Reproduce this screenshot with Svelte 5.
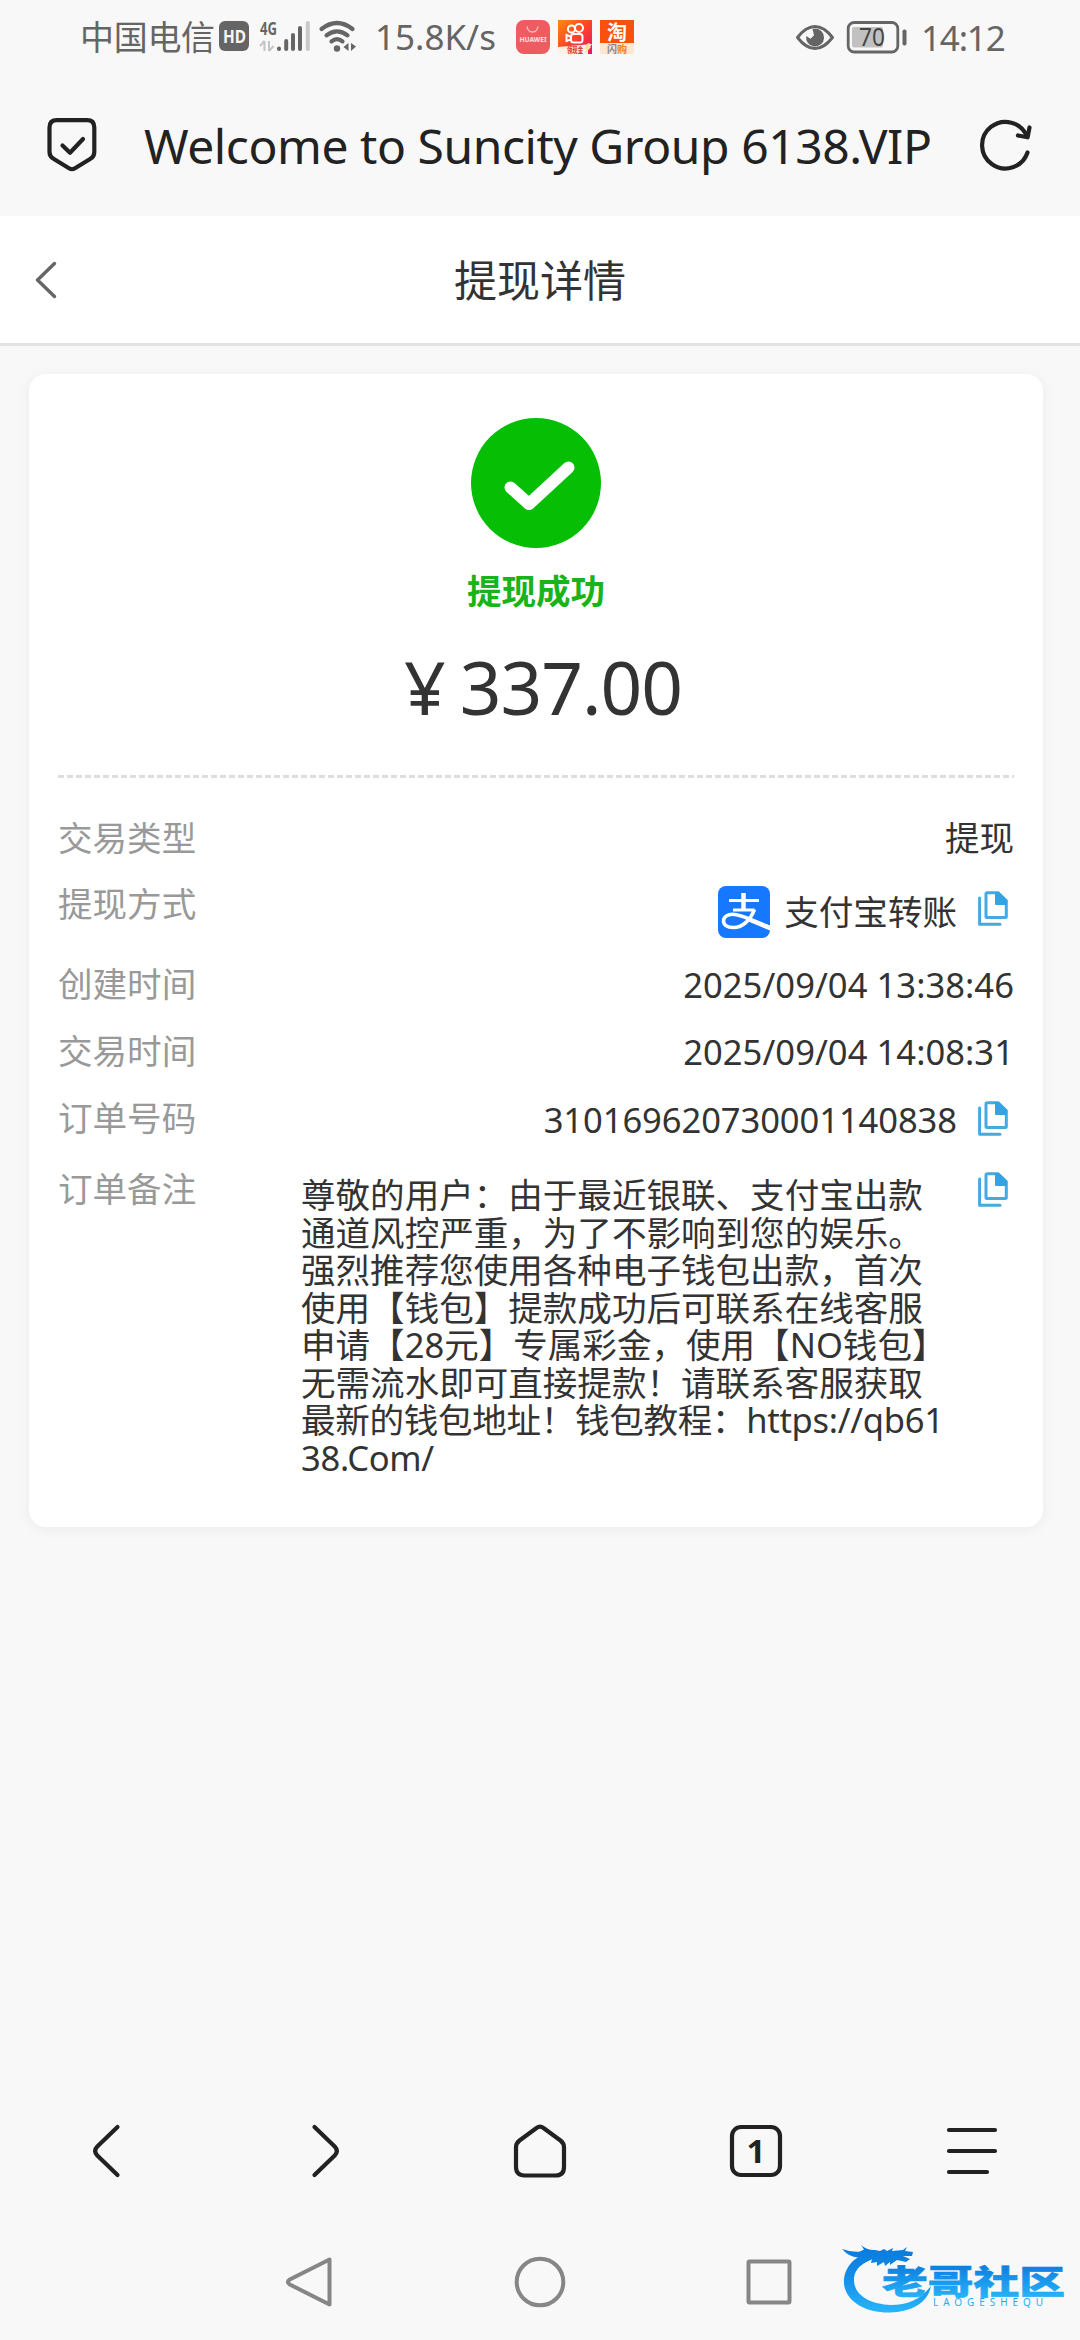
<script lang="ts">
  type Row = {
    key: string;
    label: string;
    value: string;
    kind?: 'latin' | 'order';
    alipay?: boolean;
    copy?: boolean;
  };

  const rows: Row[] = [
    { key: 'type', label: '交易类型', value: '提现' },
    { key: 'method', label: '提现方式', value: '支付宝转账', alipay: true, copy: true },
    { key: 'created', label: '创建时间', value: '2025/09/04 13:38:46', kind: 'latin' },
    { key: 'traded', label: '交易时间', value: '2025/09/04 14:08:31', kind: 'latin' },
    { key: 'order', label: '订单号码', value: '310169620730001140838', kind: 'order', copy: true },
  ];

  const noteLines = [
    '尊敬的用户：由于最近银联、支付宝出款',
    '通道风控严重，为了不影响到您的娱乐。',
    '强烈推荐您使用各种电子钱包出款，首次',
    '使用【钱包】提款成功后可联系在线客服',
    '申请【28元】专属彩金，使用【NO钱包】',
    '无需流水即可直接提款！请联系客服获取',
    '最新的钱包地址！钱包教程：https://qb61',
    '38.Com/',
  ];
</script>

{#snippet copyIcon()}
  <svg class="copy" width="30" height="35" viewBox="0 0 30 35" aria-hidden="true">
    <path d="M1.6 7v26.2H22" fill="none" stroke="#46a9e0" stroke-width="3" stroke-linecap="round" stroke-linejoin="round" />
    <path d="M9.5 1.7H20l8.3 8V25.600q0 1-1 1H9q-1 0-1-1V3q0-1.300 1.500-1.300z" fill="#fff" stroke="#46a9e0" stroke-width="3" />
    <path d="M17 1h4l8 8v5H18q-1 0-1-1z" fill="#35a3e3" />
  </svg>
{/snippet}

<div class="screen">
  <div class="status">
    <span class="carrier">中国电信</span>
    <svg class="signals" width="140" height="36" viewBox="218 19 140 36" aria-hidden="true">
      <rect x="219" y="21" width="30" height="30" rx="6" fill="#656565" />
      <text x="223" y="43" font-size="18.500" font-weight="700" fill="#f7f7f7" textLength="23" lengthAdjust="spacingAndGlyphs">HD</text>
      <text x="260" y="34.500" font-size="18" font-weight="700" fill="#656565" textLength="17" lengthAdjust="spacingAndGlyphs">4G</text>
      <path d="M264.500 41v10M260 46l4.500-5M269 41v10M269 51l4.500-5" stroke="#c4c4c4" stroke-width="2" fill="none" />
      <g stroke="#656565" stroke-width="4" stroke-linecap="round">
        <path d="M279 48.500v.5M286.200 41v8M293 35v14M300 28v21" />
        <path d="M307.800 23v26" stroke="#c8c8c8" />
      </g>
      <g fill="none" stroke="#656565" stroke-width="4.200" stroke-linecap="round">
        <path d="M321.500 29q15.500-12 31 0M326.500 35.300q10.500-8 21 0M331.500 41.300q5.500-4.500 11 0" />
      </g>
      <circle cx="337" cy="48.500" r="3.200" fill="#656565" />
      <path d="M348.500 43v8l-5-4zM351 43v8l5-4.500z" fill="#656565" />
    </svg>
    <span class="speed">15.8K/s</span>
    <svg class="apps" width="120" height="36" viewBox="515 18 120 36" aria-hidden="true">
      <defs>
        <linearGradient id="ks" x1="0" y1="0" x2="1" y2="1">
          <stop offset="0" stop-color="#ff8a10" />
          <stop offset=".5" stop-color="#fb4427" />
          <stop offset="1" stop-color="#e51372" />
        </linearGradient>
      </defs>
      <rect x="516" y="19" width="34" height="34" rx="8" fill="#ee5c62" />
      <path d="M527 25.500q1 5.500 5.500 5.500t5.500-5.500" fill="none" stroke="#ffc6c4" stroke-width="1.300" />
      <text x="519.500" y="41" font-size="7" font-weight="700" fill="#ffe0df" textLength="27" lengthAdjust="spacingAndGlyphs">HUAWEI</text>
      <rect x="558" y="19" width="34" height="34" fill="url(#ks)" />
      <g fill="none" stroke="#fff" stroke-width="2">
        <circle cx="571.500" cy="28" r="3.600" />
        <circle cx="579" cy="27" r="4" />
        <rect x="571" y="33" width="11.500" height="8.500" rx="2.500" />
        <path d="M570.500 35.500l-4-1.500v6l4-1.500" />
      </g>
      <path d="M558 46l34-3-4 6v4h-30z" fill="#fff0e8" />
      <text x="567" y="51.500" font-size="8" font-weight="700" fill="#d42a24" textLength="16" lengthAdjust="spacingAndGlyphs">领现金</text>
      <path d="M588 42l-4 6h3l-2 5 6-7h-3l2-4z" fill="#ffe08a" />
      <rect x="600" y="19" width="34" height="23" fill="#f9500d" />
      <rect x="600" y="42" width="34" height="11" fill="#fde6d2" />
      <text x="607" y="38.500" font-size="20" font-weight="700" fill="#fff">淘</text>
      <text x="607" y="51.500" font-size="10" font-weight="700" fill="#888">闪</text>
      <text x="617" y="51.500" font-size="10" font-weight="700" fill="#f47a1c">购</text>
    </svg>
    <svg class="power" width="114" height="36" viewBox="794 18 114 36" aria-hidden="true">
      <path d="M797.500 36.500Q806 25.500 815 25.500t17.500 11Q824 47.500 815 47.500t-17.500-11z" fill="none" stroke="#656565" stroke-width="3" stroke-linejoin="round" />
      <path d="M815 27.500a9 9 0 1 1-8.800 7.500l4.300 2.800 3.500-3.500-1.500-6.200z" fill="#656565" />
      <rect x="848.200" y="21.500" width="49.600" height="29.500" rx="6" fill="none" stroke="#656565" stroke-width="2.800" />
      <rect x="852" y="26" width="31" height="20.500" rx="2" fill="#c1c1c1" />
      <text x="859" y="45" font-size="25" fill="#454545" textLength="26" lengthAdjust="spacingAndGlyphs">70</text>
      <rect x="902.500" y="28.500" width="4" height="16" rx="1.800" fill="#656565" />
    </svg>
    <span class="clock">14:12</span>
  </div>

  <div class="address">
    <svg width="50" height="54" viewBox="0 0 50 54" fill="none" stroke="#222" stroke-width="4.200" stroke-linecap="round" stroke-linejoin="round" aria-hidden="true">
      <path d="M10 2.200H40q7.300 0 7.300 7.300V34q0 4.500-3.800 6.800L28 50.300q-3 1.800-6 0L6.500 40.800Q2.500 38.500 2.500 34V9.500Q2.500 2.200 10 2.200z" />
      <path d="M15.500 27.500l7.500 7.300L36 21" />
    </svg>
    <span class="site">Welcome to Suncity Group 6138.VIP</span>
    <svg class="reload" width="52" height="52" viewBox="0 0 52 52" fill="none" stroke="#222" stroke-width="4.200" stroke-linecap="round" stroke-linejoin="round" aria-hidden="true">
      <path d="M47.500 33.500A23.300 23.300 0 1 1 47 17.500" />
      <path d="M49.500 8.500L47.600 18.300 38 16.500" />
    </svg>
  </div>

  <header class="titlebar">
    <svg width="22" height="38" viewBox="0 0 22 38" fill="none" stroke="#666" stroke-width="3.400" stroke-linecap="round" stroke-linejoin="round" aria-hidden="true">
      <path d="M19.500 2.500L2.500 19l17 16.500" />
    </svg>
    <h1>提现详情</h1>
  </header>

  <main>
    <section class="card">
      <div class="result">
        <svg width="130" height="130" viewBox="0 0 130 130" aria-hidden="true">
          <circle cx="65" cy="65" r="65" fill="#06be04" />
          <path d="M39.500 69.500L58 86l39.500-36.500" fill="none" stroke="#fff" stroke-width="12" stroke-linecap="round" stroke-linejoin="round" />
        </svg>
        <strong>提现成功</strong>
        <p class="amount"><span class="yen">¥</span><span>337.00</span></p>
      </div>

      <div class="dash"></div>

      <dl>
        {#each rows as row (row.key)}
          <div class="row row--{row.key}">
            <dt>{row.label}</dt>
            <dd>
              {#if row.alipay}
                <svg class="alipay" width="52" height="52" viewBox="0 0 52 52" aria-hidden="true">
                  <rect width="52" height="52" rx="8" fill="#1677ff" />
                  <g fill="none" stroke="#fff">
                    <path d="M11 14.500H41M15 24H36.500" stroke-width="3" />
                    <path d="M25.500 7V23" stroke-width="4.500" />
                    <path d="M36.500 23.500C33 33 25 41.500 15.500 41.500c-7 0-10-3-10-6.500 0-4 4-6.700 9-6.700 8 0 18 5.200 37.500 13.200" stroke-width="3.600" />
                  </g>
                  <path d="M31 32.500L52 39.500V44.500L28 34.500z" fill="#fff" />
                </svg>
              {/if}
              <span class={row.kind}>{row.value}</span>
              {#if row.copy}{@render copyIcon()}{/if}
            </dd>
          </div>
        {/each}
        <div class="row row--note">
          <dt>订单备注</dt>
          <dd class="note">
            {#each noteLines as line, i (i)}
              <span class:url={i > 5}>{line}</span>
            {/each}
          </dd>
          {@render copyIcon()}
        </div>
      </dl>
    </section>
  </main>

  <nav class="toolbar">
    <svg viewBox="0 0 56 56" aria-hidden="true"><path d="M37.500 4L17.300 23.500q-4.300 4.500 0 9L37.500 52" /></svg>
    <svg viewBox="0 0 56 56" aria-hidden="true"><path d="M18.500 4L38.700 23.500q4.300 4.500 0 9L18.500 52" /></svg>
    <svg viewBox="0 0 56 56" aria-hidden="true"><path d="M24.500 5q3.500-2.700 7 0L48.500 17.500q3.500 2.700 3.500 7V44q0 8.500-8.500 8.500h-31Q4 52.500 4 44V24.500q0-4.300 3.500-7z" /></svg>
    <svg viewBox="0 0 56 56" aria-hidden="true">
      <rect x="4" y="4" width="48" height="48" rx="9" />
      <text x="28" y="40" font-size="33" font-weight="700" text-anchor="middle">1</text>
    </svg>
    <svg viewBox="0 0 56 56" aria-hidden="true"><path d="M5 7H51M5 28H51M5 49H43" /></svg>
  </nav>

  <div class="system">
    <svg viewBox="0 0 54 54" aria-hidden="true"><path d="M45.500 4.500V49.500L5.800 29.500q-3.800-2.500 0-5z" /></svg>
    <svg viewBox="0 0 54 54" aria-hidden="true"><circle cx="27" cy="27" r="23.300" /></svg>
    <svg viewBox="0 0 54 54" aria-hidden="true"><rect x="6.500" y="6.500" width="41" height="41" rx="1" /></svg>
  </div>

  <svg class="brand" width="228" height="82" viewBox="838 2238 228 82" aria-hidden="true">
    <defs>
      <linearGradient id="brand" gradientUnits="userSpaceOnUse" x1="0" y1="2246" x2="0" y2="2312">
        <stop offset="0" stop-color="#0879dc" />
        <stop offset=".5" stop-color="#158fe9" />
        <stop offset="1" stop-color="#27b5fb" />
      </linearGradient>
      <linearGradient id="brandText" gradientUnits="userSpaceOnUse" x1="0" y1="2266" x2="0" y2="2296">
        <stop offset="0" stop-color="#0c7fe0" />
        <stop offset="1" stop-color="#27b0f8" />
      </linearGradient>
    </defs>
    <g fill="url(#brand)">
      <path d="M870 2252C852 2257 843 2270 844 2284C846 2302 866 2313 890 2312.500C911 2312 928 2303 931 2286C920 2300 907 2305 891 2305C868 2304 854 2294 854 2280C854 2268 864 2262 876 2258z" />
      <path d="M842 2249q10 3.500 18 2.500l4-2-3-4.500q6 5.500 14 5l5 1 4-2 3 2 6-3-1 3 11-1 4-3-2 4 8 1-1 4-9 0 7 3-4 3-9-2-7 5 0-3-5 4-1-4-7 4 0-4-6 1 1-4q-8 0-14-1.500-9-.5-16-8.500z" />
      <text x="882" y="2293.500" font-size="33" font-weight="900" fill="url(#brandText)" stroke="url(#brandText)" stroke-width=".6" textLength="183" lengthAdjust="spacingAndGlyphs">老哥社区</text>
      <text x="933" y="2306" font-size="10" textLength="110" lengthAdjust="spacing">LAOGESHEQU</text>
    </g>
  </svg>
</div>

<style>
  :global(body) { background: #f8f8f8; }

  .screen {
    position: relative;
    display: flex;
    flex-direction: column;
    width: 1080px;
    height: 2340px;
    overflow: hidden;
    background: #f8f8f8;
    color: #333;
    font-family: 'Noto Sans', 'Noto Sans CJK SC', sans-serif;
    font-size: 34.560px;
  }
  svg { display: block; flex: none; overflow: visible; }
  h1, p, dl, dd { margin: 0; }

  .status {
    display: flex;
    align-items: center;
    height: 74px;
    padding: 0 78px 0 80px;
    color: #656565;
    white-space: nowrap;
  }
  .carrier { width: 138px; font-size: 34px; letter-spacing: -0.300px; line-height: 70px; }
  .speed { width: 138px; margin-left: 17px; font-size: 35px; letter-spacing: 0; line-height: 72px; }
  .apps { margin-left: 2px; }
  .power { margin-left: auto; }
  .clock { width: 81px; margin-left: 13px; font-size: 35px; letter-spacing: -1.200px; }

  .address {
    display: flex;
    align-items: center;
    box-sizing: border-box;
    height: 142px;
    padding: 0 48px 0 47px;
  }
  .site {
    flex: 1;
    margin-left: 47px;
    padding-top: 2px;
    color: #222;
    font-size: 48px;
    letter-spacing: -0.450px;
    line-height: 66px;
    white-space: nowrap;
  }

  .titlebar {
    display: grid;
    grid-template-columns: 100px 1fr 100px;
    align-items: center;
    box-sizing: border-box;
    height: 130px;
    border-bottom: 3px solid #e1e2e1;
    background: #fff;
  }
  .titlebar svg { margin-left: 35px; }
  h1 { padding-top: 2px; font-size: 43px; font-weight: 400; line-height: 60px; text-align: center; }

  main { flex: 1; padding: 28px 37px 0 29px; }
  .card {
    box-sizing: border-box;
    height: 1153px;
    padding: 44px 29px 0;
    border-radius: 17px;
    background: #fff;
    box-shadow: 0 2px 14px rgba(0, 0, 0, 0.060);
  }
  .result { display: flex; flex-direction: column; align-items: center; height: 357px; }
  .result strong { margin-top: 18px; color: #19b31c; font-size: 34.560px; line-height: 50px; }
  .amount {
    display: flex;
    gap: 15px;
    margin-top: 25px;
    margin-left: 14px;
    font-size: 73px;
    line-height: 92px;
    letter-spacing: -1px;
  }

  .dash {
    height: 3px;
    margin-bottom: 27px;
    background: repeating-linear-gradient(90deg, #dedede 0 6px, transparent 6px 9px);
  }

  .row { display: flex; align-items: flex-start; height: 67px; }
  .row--type { height: 66px; }
  .row--method { height: 80px; }
  .row--order { height: 71px; }
  dt { width: 243px; color: #999; line-height: 66px; }
  dd { display: flex; flex: 1; align-items: center; justify-content: flex-end; line-height: 66px; white-space: nowrap; }
  .latin { padding-top: 1px; letter-spacing: 0.050px; }
  .order { letter-spacing: -0.080px; }
  .row--method dd { height: 82px; }
  .row--order dd { height: 70px; }
  .alipay { margin-right: 14px; }
  .copy { margin: 0 6px 0 21px; }
  .row--method .copy { margin-bottom: 7px; }
  .row--order .copy { margin-bottom: 3px; }
  .row--note .copy { margin-top: 16px; }
  dd.note { display: block; padding-top: 20px; line-height: 37.500px; }
  .note span { display: block; }
  .note .url { letter-spacing: -0.300px; }

  .toolbar { display: grid; grid-template-columns: repeat(5, 1fr); height: 156px; padding-top: 24px; box-sizing: border-box; }
  .toolbar svg {
    width: 56px;
    height: 56px;
    justify-self: center;
    fill: none;
    stroke: #222;
    stroke-width: 4.200;
    stroke-linecap: round;
    stroke-linejoin: round;
  }
  .toolbar text { fill: #222; stroke: none; }

  .system {
    display: flex;
    justify-content: center;
    gap: 175px;
    height: 85px;
  }
  .system svg { width: 54px; height: 54px; fill: none; stroke: #868686; stroke-width: 4; stroke-linejoin: round; }

  /* watermark floats over the system bar */
  .brand { position: absolute; right: 14px; bottom: 20px; }
</style>
